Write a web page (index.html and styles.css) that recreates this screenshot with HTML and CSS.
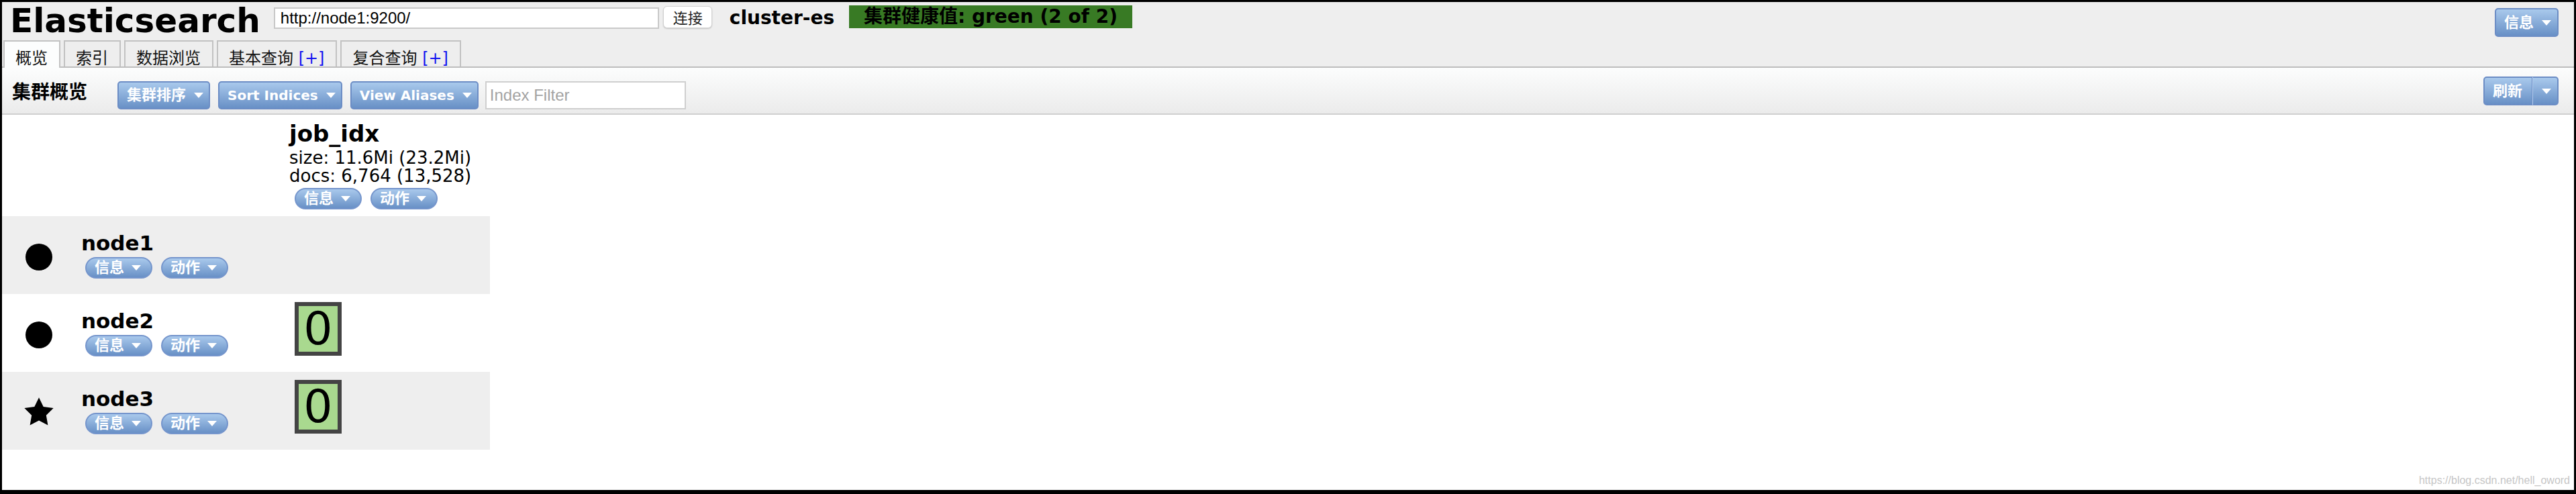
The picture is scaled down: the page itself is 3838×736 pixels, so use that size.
FILE: index.html
```html
<!DOCTYPE html>
<html lang="zh-CN">
<head>
<meta charset="utf-8">
<title>Elasticsearch Head</title>
<link rel="stylesheet" href="styles.css">
</head>
<body>
<div class="app">
  <header class="header">
    <div class="header-top">
      <h1 class="title">Elasticsearch</h1>
      <input class="url-input" type="text" value="http://node1:9200/">
      <button class="connect-btn">连接</button>
      <span class="cluster-name">cluster-es</span>
      <span class="health">集群健康值: green (2 of 2)</span>
      <button class="btn btn-cjk info-btn"><span>信息</span><i class="caret"></i></button>
    </div>
    <nav class="tabs">
      <div class="tab active">概览</div>
      <div class="tab">索引</div>
      <div class="tab">数据浏览</div>
      <div class="tab">基本查询 <span class="plus">[+]</span></div>
      <div class="tab">复合查询 <span class="plus">[+]</span></div>
    </nav>
  </header>

  <div class="toolbar">
    <span class="toolbar-label">集群概览</span>
    <button class="btn btn-cjk tb-btn"><span>集群排序</span><i class="caret"></i></button>
    <button class="btn tb-btn gap13"><span>Sort Indices</span><i class="caret"></i></button>
    <button class="btn tb-btn gap13"><span>View Aliases</span><i class="caret"></i></button>
    <input class="filter" type="text" placeholder="Index Filter">
    <div class="split">
      <button class="btn btn-cjk split-main"><span>刷新</span></button>
      <button class="btn split-arrow"><i class="caret"></i></button>
    </div>
  </div>

  <main class="overview">
    <div class="ov-row ov-head">
      <div></div>
      <div></div>
      <div class="index-cell">
        <div class="index-name">job_idx</div>
        <div class="index-stat first">size: 11.6Mi (23.2Mi)</div>
        <div class="index-stat">docs: 6,764 (13,528)</div>
        <div class="pills">
          <button class="btn btn-cjk pill"><span>信息</span><i class="caret"></i></button>
          <button class="btn btn-cjk pill"><span>动作</span><i class="caret"></i></button>
        </div>
      </div>
    </div>

    <div class="ov-row node-row alt">
      <div class="icon-cell"><span class="dot"></span></div>
      <div class="name-cell">
        <div class="node-name">node1</div>
        <div class="pills node-pills">
          <button class="btn btn-cjk pill"><span>信息</span><i class="caret"></i></button>
          <button class="btn btn-cjk pill"><span>动作</span><i class="caret"></i></button>
        </div>
      </div>
      <div class="shard-cell"></div>
    </div>

    <div class="ov-row node-row">
      <div class="icon-cell"><span class="dot"></span></div>
      <div class="name-cell">
        <div class="node-name">node2</div>
        <div class="pills node-pills">
          <button class="btn btn-cjk pill"><span>信息</span><i class="caret"></i></button>
          <button class="btn btn-cjk pill"><span>动作</span><i class="caret"></i></button>
        </div>
      </div>
      <div class="shard-cell"><div class="shard">0</div></div>
    </div>

    <div class="ov-row node-row alt">
      <div class="icon-cell">
        <svg class="star" width="52" height="52" viewBox="0 0 24 24"><polygon points="12,2 15.09,8.26 22,9.27 17,14.14 18.18,21.02 12,17.77 5.82,21.02 7,14.14 2,9.27 8.91,8.26" fill="#000"/></svg>
      </div>
      <div class="name-cell">
        <div class="node-name">node3</div>
        <div class="pills node-pills">
          <button class="btn btn-cjk pill"><span>信息</span><i class="caret"></i></button>
          <button class="btn btn-cjk pill"><span>动作</span><i class="caret"></i></button>
        </div>
      </div>
      <div class="shard-cell"><div class="shard">0</div></div>
    </div>
  </main>

  <div class="watermark">https://blog.csdn.net/hell_oword</div>
</div>
</body>
</html>
```

FILE: styles.css
```css
html, body {
  margin: 0;
  padding: 0;
}

body {
  background: #000;
  width: 3838px;
  height: 736px;
  overflow: hidden;
  font-family: "DejaVu Sans", "Noto Sans CJK SC", sans-serif;
  color: #000;
}

.app {
  position: relative;
  margin: 3px 3px 0 3px;
  width: 3832px;
  height: 727px;
  background: #fff;
  overflow: hidden;
}

/* ---------- buttons ---------- */
.btn {
  display: inline-flex;
  align-items: center;
  gap: 12px;
  box-sizing: border-box;
  height: 42px;
  margin: 0;
  padding: 0 9px 0 12px;
  border: 2px solid #6c8dc5;
  border-radius: 5px;
  background: linear-gradient(#a9c9ec, #6890c6);
  color: #fff;
  font-family: "DejaVu Sans", "Noto Sans CJK SC", sans-serif;
  font-weight: bold;
  font-size: 20px;
  line-height: 1;
  white-space: nowrap;
}

.btn-cjk {
  font-size: 22px;
}

.caret {
  display: block;
  width: 0;
  height: 0;
  border-left: 7px solid transparent;
  border-right: 7px solid transparent;
  border-top: 8px solid #fff;
}

/* ---------- header ---------- */
.header {
  background: #eeeeee;
}

.header-top {
  display: flex;
  align-items: flex-start;
  height: 57px;
}

.title {
  margin: 3px 20px 0 12px;
  font-size: 50px;
  font-weight: bold;
  line-height: 50px;
}

.url-input {
  margin-top: 8px;
  box-sizing: border-box;
  width: 574px;
  height: 32px;
  border: 2px solid #c9c9c9;
  padding: 0 8px;
  font-family: "Liberation Sans", Arial, sans-serif;
  font-size: 24px;
  color: #000;
  background: #fff;
  outline: none;
}

.connect-btn {
  margin: 6px 0 0 6px;
  box-sizing: border-box;
  height: 33px;
  padding: 0 13px 0 14px;
  border: 1px solid #d2d2d2;
  border-radius: 6px;
  background: #fff;
  box-shadow: 0 1px 2px rgba(0, 0, 0, 0.18);
  font-family: "Noto Sans CJK SC", sans-serif;
  font-size: 22px;
  line-height: 31px;
  color: #222;
}

.cluster-name {
  margin: 7px 0 0 26px;
  font-size: 28px;
  font-weight: bold;
  line-height: 34px;
}

.health {
  margin: 5px 0 0 22px;
  height: 34px;
  padding: 0 22px;
  background: #387a24;
  font-size: 28px;
  font-weight: bold;
  line-height: 34px;
  color: #000;
}

.header-top .info-btn {
  margin: 9px 23px 0 auto;
  height: 43px;
}

.tabs {
  display: flex;
  align-items: flex-start;
  gap: 5px;
  padding-left: 2px;
  border-bottom: 2px solid #bdbdbd;
}

.tab {
  border: 2px solid #c2c2c2;
  border-bottom: 0;
  padding: 13px 17px 0 16px;
  font-size: 24px;
  line-height: 24px;
  background: #eeeeee;
  color: #111;
}

.tab.active {
  background: #fcfdfd;
  padding-bottom: 2px;
  margin-bottom: -2px;
}

.plus {
  color: #1010f0;
}

/* ---------- toolbar ---------- */
.toolbar {
  display: flex;
  align-items: flex-start;
  height: 68px;
  padding-left: 15px;
  background: linear-gradient(#fcfdfd, #ebebeb);
  border-bottom: 2px solid #cfcfcf;
}

.toolbar-label {
  margin: 20px 45px 0 0;
  font-size: 28px;
  font-weight: bold;
  line-height: 34px;
}

.toolbar .tb-btn {
  margin-top: 20px;
  padding-right: 8px;
}

.toolbar .gap13 {
  margin-left: 12px;
}

.filter {
  margin: 20px 0 0 10px;
  box-sizing: border-box;
  width: 299px;
  height: 42px;
  border: 2px solid #cfcfcf;
  padding: 0 5px;
  font-family: "Liberation Sans", Arial, sans-serif;
  font-size: 24px;
  background: #fff;
  outline: none;
}

.filter::placeholder {
  color: #a3a3a3;
}

.split {
  display: flex;
  margin: 13px 23px 0 auto;
}

.split .split-main {
  height: 43px;
  padding: 0 14px 0 12px;
  border-right: 1px solid #6c8dc5;
  border-radius: 5px 0 0 5px;
}

.split .split-arrow {
  height: 43px;
  padding: 0 9px 0 13px;
  border-left: 1px solid #b3cdee;
  border-radius: 0 5px 5px 0;
}

/* ---------- overview ---------- */
.overview {
  width: 727px;
}

.ov-row {
  display: grid;
  grid-template-columns: 110px 317px 300px;
}

.ov-head {
  height: 151px;
}

.node-row {
  height: 116px;
}

.node-row.alt {
  background: #eeeeee;
}

.index-cell {
  padding: 8px 0 0 9px;
}

.index-name {
  margin-left: -8px;
  font-size: 34px;
  font-weight: bold;
  line-height: 40px;
}

.index-stat {
  margin-left: -8px;
  font-size: 26px;
  line-height: 27px;
}

.index-stat.first {
  margin-top: 3px;
}

.pills {
  display: flex;
  gap: 13px;
  margin-top: 4px;
}

.pills .pill {
  height: 32px;
  padding: 0 15px 0 12px;
  gap: 11px;
  border-radius: 16px;
  border-color: #7595cc;
}

.icon-cell {
  display: flex;
  align-items: center;
  justify-content: center;
  padding-top: 6px;
}

.dot {
  display: block;
  width: 40px;
  height: 40px;
  border-radius: 50%;
  background: #000;
}

.star {
  display: block;
  margin-top: -2px;
}

.name-cell {
  display: flex;
  flex-direction: column;
  justify-content: center;
  padding-left: 8px;
}

.node-name {
  font-size: 31px;
  font-weight: bold;
  line-height: 34px;
}

.node-pills {
  margin: 4px 0 0 6px;
}

.shard-cell {
  padding: 12px 0 0 9px;
}

.shard {
  box-sizing: border-box;
  width: 70px;
  height: 80px;
  border: 6px solid #444;
  background: #a9d98f;
  font-size: 68px;
  line-height: 68px;
  text-align: center;
  color: #000;
}

.watermark {
  position: absolute;
  right: 6px;
  bottom: 6px;
  font-family: "Liberation Sans", Arial, sans-serif;
  font-size: 16px;
  line-height: 16px;
  color: #c6c6c6;
}
```
